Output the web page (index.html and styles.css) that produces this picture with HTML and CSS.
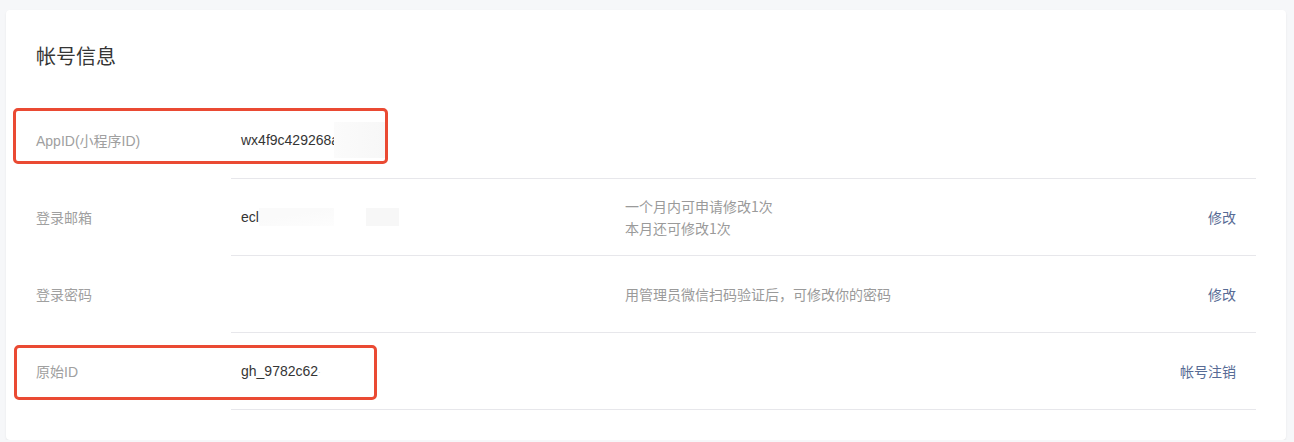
FILE: index.html
```html
<!DOCTYPE html>
<html lang="zh-CN">
<head>
<meta charset="utf-8">
<title>帐号信息</title>
<link rel="stylesheet" href="styles.css">
</head>
<body>
<div class="card">
  <h2 class="title">帐号信息</h2>
  <div class="list">
    <div class="row">
      <div class="label">AppID(小程序ID)</div>
      <div class="content">
        <div class="value"><span>wx4f9c429268a</span><span class="mask mask-appid"></span></div>
      </div>
      <div class="mark mark-1"></div>
    </div>
    <div class="row">
      <div class="label">登录邮箱</div>
      <div class="content">
        <div class="value"><span>ecl</span><span class="mask mask-mail1"></span><span class="mask mask-mail2"></span></div>
        <div class="desc">一个月内可申请修改1次<br>本月还可修改1次</div>
        <a class="action">修改</a>
      </div>
    </div>
    <div class="row">
      <div class="label">登录密码</div>
      <div class="content">
        <div class="value"></div>
        <div class="desc">用管理员微信扫码验证后，可修改你的密码</div>
        <a class="action">修改</a>
      </div>
    </div>
    <div class="row">
      <div class="label">原始ID</div>
      <div class="content">
        <div class="value"><span>gh_9782c62</span><span class="dot">.</span></div>
        <div class="desc"></div>
        <a class="action">帐号注销</a>
      </div>
      <div class="mark mark-2"></div>
    </div>
  </div>
</div>
</body>
</html>
```

FILE: styles.css
```css
html, body {
  margin: 0;
  padding: 0;
  background: #f6f7f9;
}
body {
  padding: 10px 8px 0 6px;
  font-family: "Liberation Sans", "Noto Sans CJK SC", sans-serif;
  font-size: 14px;
  color: #353535;
}
.card {
  background: #fff;
  border-radius: 4px;
  box-shadow: 0 1px 2px rgba(0, 0, 0, 0.08);
  padding: 32px 30px 30px 30px;
  height: 368px;
}
.title {
  margin: 0 0 32px 0;
  font-size: 20px;
  line-height: 28px;
  font-weight: 400;
  color: #353535;
  font-family: "Noto Sans CJK SC", sans-serif;
}
.list {
  display: flex;
  flex-direction: column;
}
.row {
  display: flex;
  align-items: stretch;
  height: 77px;
  position: relative;
}
.label {
  width: 195px;
  flex: none;
  display: flex;
  align-items: center;
  padding-bottom: 2px;
  color: #a0a0a0;
  font-family: "Liberation Sans", "Noto Sans CJK SC", sans-serif;
}
.content {
  flex: 1;
  display: flex;
  align-items: center;
  border-bottom: 1px solid #e7e7eb;
  padding: 0 20px 1px 10px;
}
.value {
  width: 384px;
  flex: none;
  display: flex;
  align-items: center;
  white-space: nowrap;
  color: #353535;
}
.dot {
  color: #c8c8c8;
  font-size: 9px;
  align-self: baseline;
  position: relative;
  top: 2px;
}
.mask {
  display: inline-block;
  height: 18px;
  background: #f8f8f8;
}
.mask-appid {
  width: 53px;
  height: 36px;
  margin-left: -5px;
  background: linear-gradient(to right, #fbfbfb, #f7f7f7);
}
.mask-mail1 {
  width: 75px;
  background: linear-gradient(170deg, #fafafa 40%, #fdfdfd 100%);
}
.mask-mail2 {
  width: 33px;
  margin-left: 32px;
  background: #f7f7f7;
}
.desc {
  flex: 1;
  color: #9a9a9a;
  line-height: 22px;
  font-family: "Noto Sans CJK SC", sans-serif;
}
.action {
  color: #576b95;
  text-decoration: none;
  font-family: "Noto Sans CJK SC", sans-serif;
}
.mark {
  position: absolute;
  border: 3px solid #ea4a33;
  border-radius: 5px;
  pointer-events: none;
}
.mark-1 {
  left: -23px;
  top: 6px;
  width: 369px;
  height: 50px;
}
.mark-2 {
  left: -22px;
  top: 12px;
  width: 357px;
  height: 49px;
}
```
